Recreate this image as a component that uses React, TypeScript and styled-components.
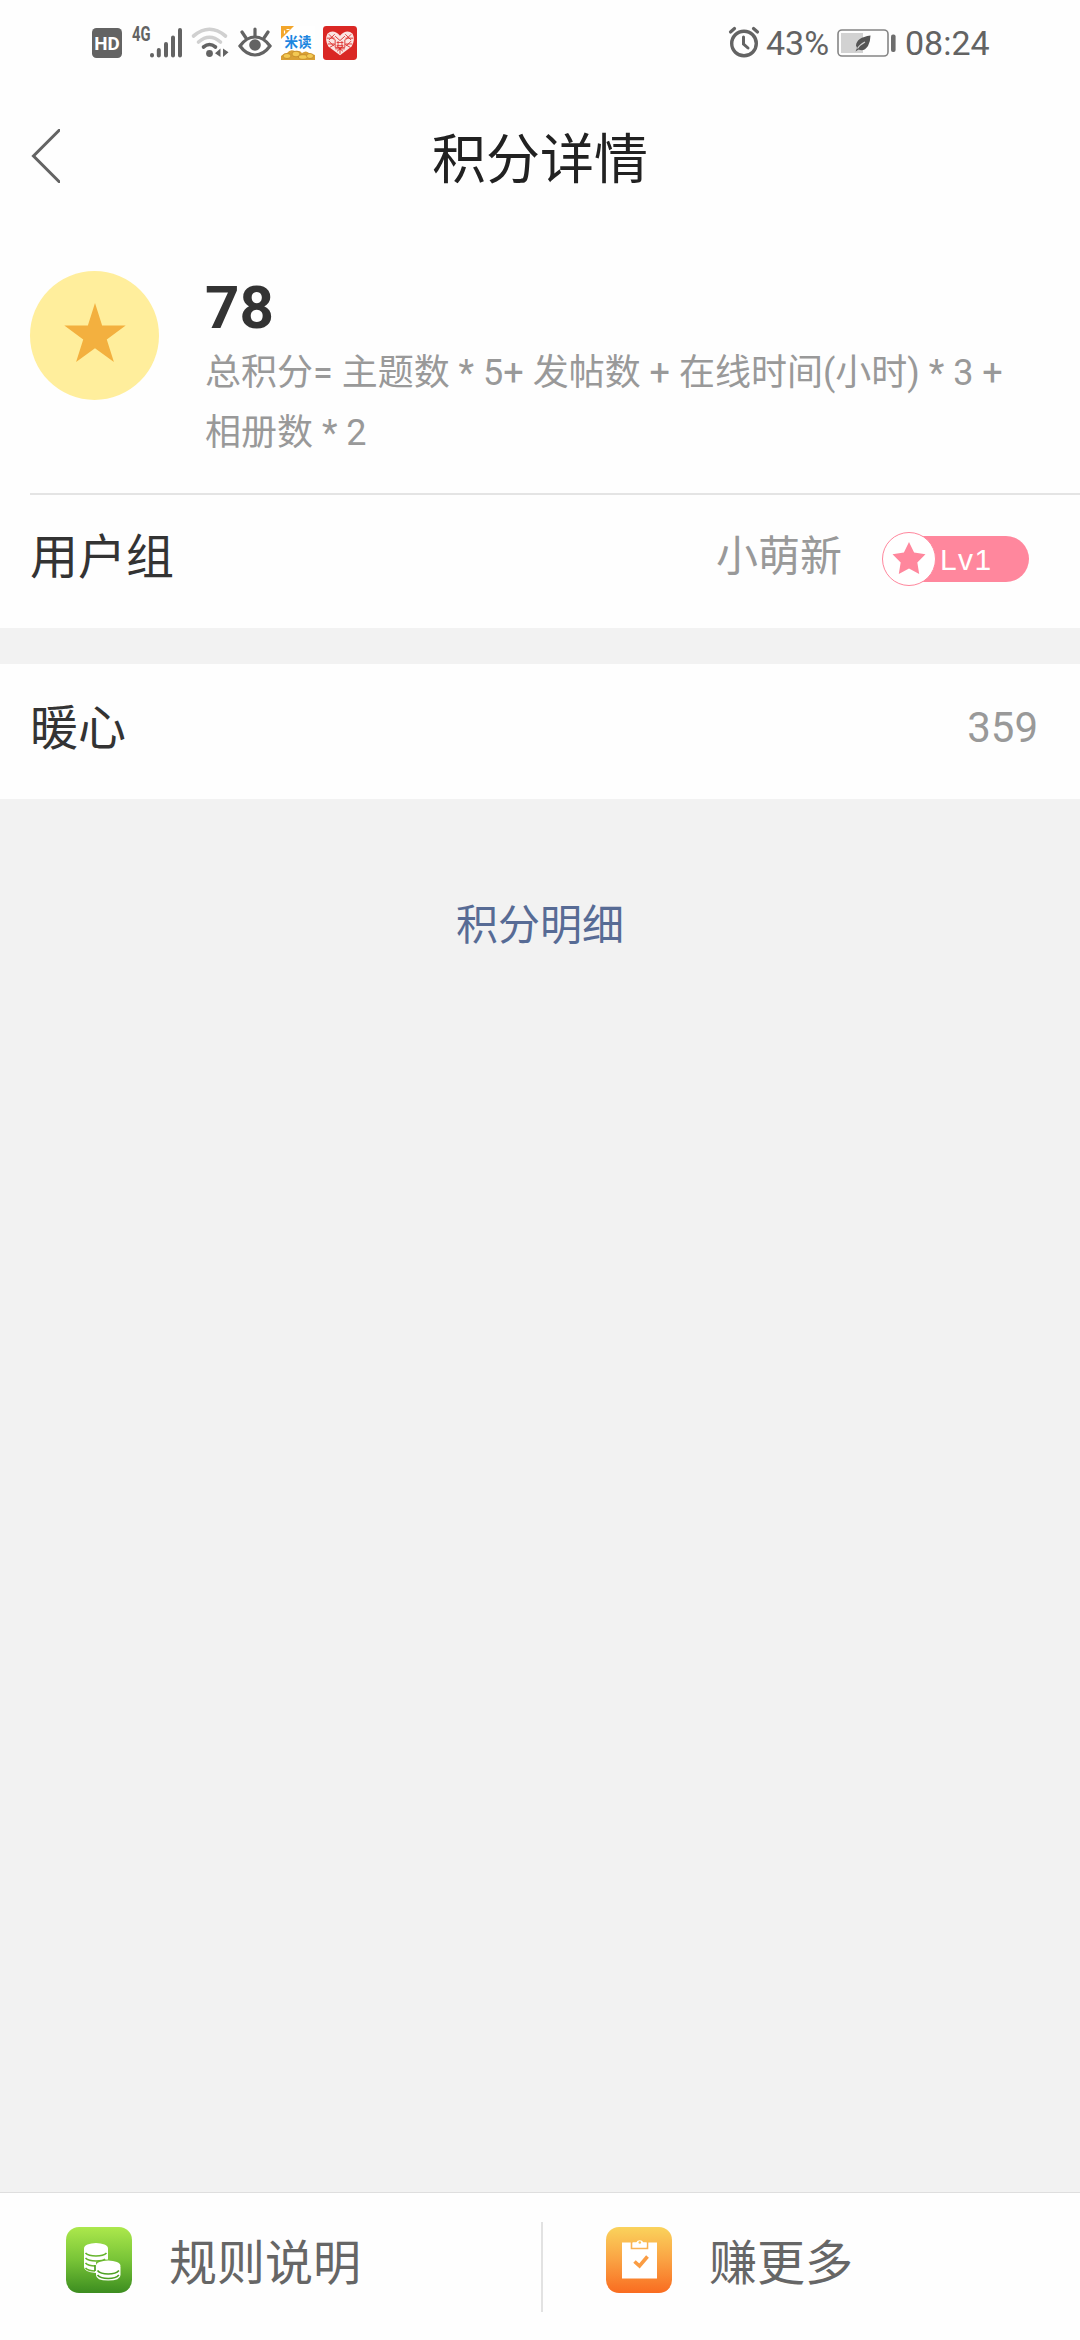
import React from "react";
import styled, { createGlobalStyle } from "styled-components";

const Global = createGlobalStyle`
  * { box-sizing: border-box; }
  body {
    margin: 0;
    background: #f2f2f2;
    font-family: Roboto, "Noto Sans CJK SC", sans-serif;
    color: #333333;
  }
`;

const Screen = styled.div`
  width: 1080px;
  height: 2340px;
  display: flex;
  flex-direction: column;
  background: #f2f2f2;
  overflow: hidden;
`;

const StatusBar = styled.header`
  height: 84px;
  padding: 2px 91px 0 92px;
  display: flex;
  align-items: center;
  background: #fefefe;
  color: #636363;
  font-size: 34px;
  line-height: 40px;
`;

const Glyph = styled.svg<{ $w: number; $h: number; $gap?: number; $lift?: number }>`
  display: block;
  flex: none;
  overflow: visible;
  width: ${(p) => p.$w}px;
  height: ${(p) => p.$h}px;
  margin-left: ${(p) => p.$gap ?? 0}px;
  margin-bottom: ${(p) => p.$lift ?? 0}px;
`;

const StatusText = styled.span<{ $gap: number; $width: number }>`
  margin-left: ${(p) => p.$gap}px;
  width: ${(p) => p.$width}px;
  white-space: nowrap;
`;

const Spacer = styled.div`
  flex: 1;
`;

const NavBar = styled.nav`
  height: 148px;
  padding: 0 30px;
  display: grid;
  grid-template-columns: 60px 1fr 60px;
  align-items: center;
  background: #fefefe;
`;

const Title = styled.h1`
  margin: 0;
  padding-top: 6px;
  text-align: center;
  font-size: 54px;
  line-height: 80px;
  font-weight: 400;
  color: #212121;
`;

const Panel = styled.section<{ $gap?: number }>`
  background: #fefefe;
  margin-bottom: ${(p) => p.$gap ?? 0}px;
`;

const Summary = styled.div`
  height: 263px;
  margin-left: 30px;
  padding-top: 39px;
  display: flex;
  align-items: flex-start;
  gap: 46px;
  border-bottom: 2px solid #e4e4e4;
`;

const Coin = styled.div`
  flex: none;
  width: 129px;
  height: 129px;
  padding-bottom: 6px;
  border-radius: 50%;
  background: #ffee9c;
  display: flex;
  align-items: center;
  justify-content: center;
`;

const SummaryText = styled.div`
  width: 820px;
`;

const Score = styled.div`
  margin: 1px 0 -1px;
  font-size: 60px;
  line-height: 72px;
  font-weight: 700;
  color: #333333;
`;

const Formula = styled.p`
  margin: 0;
  font-size: 36px;
  line-height: 60px;
  color: #999999;
`;

const Row = styled.div<{ $height: number; $right: number; $bottom: number }>`
  height: ${(p) => p.$height}px;
  padding: 0 ${(p) => p.$right}px ${(p) => p.$bottom}px 30px;
  display: flex;
  align-items: center;
`;

const RowLabel = styled.span`
  flex: 1;
  font-size: 48px;
  line-height: 70px;
`;

const RowValue = styled.span<{ $lift?: number }>`
  padding-bottom: ${(p) => p.$lift ?? 0}px;
  font-size: 42px;
  line-height: 60px;
  color: #999999;
`;

const Badge = styled.div`
  width: 147px;
  height: 54px;
  margin: 2px 0 0 40px;
  display: flex;
  align-items: center;
`;

const BadgeStar = styled.div`
  flex: none;
  width: 54px;
  height: 54px;
  padding-bottom: 2px;
  border: 1.5px solid #ff879d;
  border-radius: 50%;
  background: #ffffff;
  display: flex;
  align-items: center;
  justify-content: center;
  z-index: 1;
`;

const BadgeLevel = styled.div`
  flex: 1;
  height: 46px;
  margin-left: -27px;
  padding-left: 31px;
  border-radius: 0 23px 23px 0;
  background: #ff879d;
  color: #ffffff;
  font-family: "Liberation Sans", Arial, sans-serif;
  font-size: 30px;
  line-height: 48px;
  letter-spacing: 1.4px;
`;

const DetailLink = styled.a`
  display: block;
  margin-top: 97px;
  text-align: center;
  font-size: 42px;
  line-height: 60px;
  color: #576b95;
`;

const BottomBar = styled.footer`
  height: 148px;
  margin-top: auto;
  display: flex;
  align-items: center;
  background: #fefefe;
  border-top: 1px solid #dedede;
`;

const Action = styled.button`
  flex: 1;
  height: 100%;
  border: 0;
  padding: 0 0 14px 66px;
  background: none;
  display: flex;
  align-items: center;
  gap: 37px;
  font-family: inherit;
  font-size: 48px;
  line-height: 70px;
  color: #666666;
`;

const ActionLabel = styled.span`
  padding-top: 9px;
`;

const ActionIcon = styled.div<{ $from: string; $mid: string; $to: string }>`
  width: 66px;
  height: 66px;
  border-radius: 13px;
  background: linear-gradient(
    ${(p) => p.$from},
    ${(p) => p.$mid} 50%,
    ${(p) => p.$to}
  );
`;

const Divider = styled.div`
  width: 2px;
  height: 90px;
  margin: 0 -3px 0 1px;
  background: #e2e2e2;
`;

const STAR =
  "M50 0 61.5 36H99.5L69 58 80.500 94 50 72 19.500 94 31 58 .5 36H38.5Z";

const WIDE_STAR =
  "M50 0 65 31 98.500 36 74.500 60 80 94 50 78 20 94 25.500 60 1.500 36 35 31Z";

const HdIcon = () => (
  <Glyph $w={30} $h={30} viewBox="0 0 30 30">
    <rect width="30" height="30" rx="4.5" fill="#636363" />
    <text x="15" y="21.5" textAnchor="middle" textLength="25.500" lengthAdjust="spacingAndGlyphs"
      fontFamily="Roboto, sans-serif" fontWeight="700" fontSize="18.500" fill="#fff">HD</text>
  </Glyph>
);

const SignalIcon = () => (
  <Glyph $w={52} $h={32} $gap={10} viewBox="0 0 52 32">
    <text x="0" y="14" textLength="18.500" lengthAdjust="spacingAndGlyphs"
      fontFamily="Roboto, sans-serif" fontWeight="700" fontSize="19.500" fill="#636363">4G</text>
    <g stroke="#636363" strokeWidth="4" strokeLinecap="round">
      <path d="M20 28v.4M26.8 23v5.500M34 17v11.500M41 10.500v18M48 3v25.500" />
    </g>
  </Glyph>
);

const WifiIcon = () => (
  <Glyph $w={38} $h={32} $gap={7} viewBox="0 0 38 32">
    <g fill="none" strokeWidth="3.6" strokeLinecap="round">
      <path d="M2.500 9Q18.500-4.500 34.500 9" stroke="#d0d0d0" />
      <path d="M7.500 15Q18.500 5.500 29.500 15" stroke="#d0d0d0" />
      <path d="M12.500 20Q18.500 15 24.500 20" stroke="#636363" />
    </g>
    <circle cx="18.500" cy="26.500" r="3.400" fill="#636363" />
    <path d="M29.500 21.500v8.500L24 26.300ZM32 21.500v8.500L37.500 25.200Z" fill="#636363" />
  </Glyph>
);

const EyeIcon = () => (
  <Glyph $w={34} $h={32} $gap={9} viewBox="0 0 34 32">
    <g fill="none" stroke="#636363" strokeWidth="3.200" strokeLinecap="round">
      <path d="M2 19Q8.500 10 17 10T32 19Q25.500 28 17 28T2 19Z" />
      <path d="M17 9V2M8 11 4 5M26 11 30 5" />
    </g>
    <circle cx="17" cy="18" r="5.800" fill="#636363" />
  </Glyph>
);

const ReaderAppIcon = () => (
  <Glyph $w={34} $h={34} $gap={9} viewBox="0 0 34 34">
    <rect width="34" height="34" fill="#fff" />
    <path d="M0 0H13L0 13Z" fill="#f3a62b" />
    <path d="M3.500 4.500v3M5.500 3.500h3" stroke="#fff" strokeWidth="1.200" />
    <text x="3.500" y="20.500" textLength="27" lengthAdjust="spacingAndGlyphs"
      fontFamily="'Noto Sans CJK SC', sans-serif" fontWeight="700" fontSize="14" fill="#1d86e0">米读</text>
    <path d="M0 34v-4q3-3 6-3 3-4 8-2 5-1 7 2 4-3 7 0l6 2v5Z" fill="#d9a035" />
    <g fill="#f3c953" stroke="#bd8425" strokeWidth=".7">
      <ellipse cx="6" cy="30" rx="4" ry="2.500" />
      <ellipse cx="15" cy="28" rx="4" ry="2.800" />
      <ellipse cx="22" cy="31" rx="4.500" ry="2.300" />
      <ellipse cx="29" cy="30" rx="3.500" ry="2.500" />
    </g>
  </Glyph>
);

const HeartAppIcon = () => (
  <Glyph $w={34} $h={34} $gap={8} viewBox="0 0 35 35">
    <rect width="35" height="35" rx="3.500" fill="#da2724" />
    <path d="M17.500 30 5.500 21Q1.500 14 4.500 8 10.500 2.500 17.500 10 24.500 2.500 30.500 8 33.500 14 29.500 21Z" fill="#fbe5e2" />
    <g fill="none" stroke="#da2724" strokeWidth=".9">
      <path d="M4 12.500h8M23 12.500h8M5 18.500h7M23 18.500h7M12.500 10.500l5 4.500 5-4.500M12.500 23.500h10M17.500 21.500v7" />
      <path d="M6 8.500l6 6M12 8.500l-6 6M23 8.500l6 6M29 8.500l-6 6M7 22l5-3M28 22l-5-3M6 15.500l5 5M29 15.500l-5 5M14.500 26l6-5M20.500 26l-6-5" />
      <path d="M12.500 14v8h10v-8" />
    </g>
    <path d="M14 17h7M14 20h7M15.500 15.500v6M19.500 15.500v6" stroke="#da2724" strokeWidth=".8" />
  </Glyph>
);

const AlarmIcon = () => (
  <Glyph $w={32} $h={32} $lift={2} viewBox="0 0 32 32">
    <g fill="none" stroke="#636363" strokeLinecap="round">
      <circle cx="16" cy="17.500" r="12.300" strokeWidth="3.400" />
      <path d="M2.500 6 6.500 2.500M29.500 6 25.500 2.500" strokeWidth="3.200" />
      <path d="M15.500 11v7l4.500 4" strokeWidth="3" />
    </g>
  </Glyph>
);

const BatteryIcon = () => (
  <Glyph $w={59} $h={28} $gap={9} viewBox="0 0 59 28">
    <rect x="1" y="1" width="50" height="26" rx="4" fill="none" stroke="#858585" strokeWidth="1.600" />
    <rect x="4" y="4" width="22" height="20" fill="#d2d2d2" />
    <path d="M33.500 6.500Q19.500 8.500 19 16.500L20 19 18.500 22.500 21.500 20.500Q27 23 31 17 33.500 12 33.500 6.500Z" fill="#555" />
    <path d="M20.500 19.500Q22.500 16 28 13" fill="none" stroke="#d2d2d2" strokeWidth="1.200" />
    <rect x="54" y="5.500" width="4.600" height="17.500" rx="2" fill="#6d6d6d" />
  </Glyph>
);

const BackIcon = () => (
  <Glyph $w={30} $h={54} $lift={4} viewBox="0 0 30 54" style={{ overflow: "hidden" }}>
    <path d="M31.500-1 3.500 27 31.500 55" fill="none" stroke="#636363" strokeWidth="3" />
  </Glyph>
);

const CoinsIcon = () => (
  <svg width="66" height="66" viewBox="0 0 66 66">
    <path d="M18 22v18q0 5 12 6V35q3-2.500 12-2.500V22Z" fill="#fff" />
    <ellipse cx="30" cy="21.500" rx="12" ry="5.500" fill="#fff" />
    <g fill="none" stroke="#67b52d" strokeWidth="1.700">
      <path d="M19.500 26q3 3 10.500 3t10.500-3M19.500 31q3 3 10.500 3M19.500 36q3 3 9.500 3M19.500 41q3 3 9.500 3M30 34q7.500 0 9-2" />
    </g>
    <path d="M30 40v8q0 5.500 12.200 5.500T54.500 48v-8Z" fill="#fff" />
    <ellipse cx="42.200" cy="39" rx="12.300" ry="5.600" fill="#fff" />
    <g fill="none" stroke="#4da023" strokeWidth="1.700">
      <path d="M29 38v6M31.500 43.500q3 3.500 10.700 3.500t10.700-3.500M31.500 48q3 3.500 10.700 3.500t10.700-3.500" />
    </g>
  </svg>
);

const TaskIcon = () => (
  <svg width="66" height="66" viewBox="0 0 66 66">
    <path d="M16 15.500H51V51.500H16Z" fill="#fff" />
    <path d="M25.500 15v6.500h16V15" fill="none" stroke="#f9b253" strokeWidth="1.600" />
    <path d="M27 19.500v-4h3.200a4 4 0 0 1 7.200 0h3.100v4Z" fill="#fff" />
    <circle cx="33.800" cy="15.500" r="1.300" fill="#fbc45b" />
    <path d="m28.500 34.500 5 4.500 8-9.500" fill="none" stroke="#fa9c43" strokeWidth="3.600" />
  </svg>
);

export default function App() {
  return (
    <>
      <Global />
      <Screen>
        <StatusBar>
          <HdIcon />
          <SignalIcon />
          <WifiIcon />
          <EyeIcon />
          <ReaderAppIcon />
          <HeartAppIcon />
          <Spacer />
          <AlarmIcon />
          <StatusText $gap={6} $width={62}>43%</StatusText>
          <BatteryIcon />
          <StatusText $gap={9} $width={84}>08:24</StatusText>
        </StatusBar>
        <NavBar>
          <BackIcon />
          <Title>积分详情</Title>
        </NavBar>
        <Panel>
          <Summary>
            <Coin>
              <svg width="62" height="59" viewBox="0 0 100 94" preserveAspectRatio="none">
                <path d={STAR} fill="#f3b03f" />
              </svg>
            </Coin>
            <SummaryText>
              <Score>78</Score>
              <Formula>
                总积分= 主题数 * 5+ 发帖数 + 在线时间(小时) * 3 + 相册数 * 2
              </Formula>
            </SummaryText>
          </Summary>
        </Panel>
        <Panel $gap={36}>
          <Row $height={133} $right={51} $bottom={8}>
            <RowLabel>用户组</RowLabel>
            <RowValue $lift={2}>小萌新</RowValue>
            <Badge>
              <BadgeStar>
                <svg width="34" height="32" viewBox="0 0 100 94">
                  <path d={WIDE_STAR} fill="#ff879d" />
                </svg>
              </BadgeStar>
              <BadgeLevel>Lv1</BadgeLevel>
            </Badge>
          </Row>
        </Panel>
        <Panel>
          <Row $height={135} $right={42} $bottom={6}>
            <RowLabel>暖心</RowLabel>
            <RowValue $lift={1}>359</RowValue>
          </Row>
        </Panel>
        <DetailLink>积分明细</DetailLink>
        <BottomBar>
          <Action>
            <ActionIcon $from="#ace84c" $mid="#78c437" $to="#3c8d20">
              <CoinsIcon />
            </ActionIcon>
            <ActionLabel>规则说明</ActionLabel>
          </Action>
          <Divider />
          <Action>
            <ActionIcon $from="#fad35c" $mid="#faa243" $to="#f96c20">
              <TaskIcon />
            </ActionIcon>
            <ActionLabel>赚更多</ActionLabel>
          </Action>
        </BottomBar>
      </Screen>
    </>
  );
}
